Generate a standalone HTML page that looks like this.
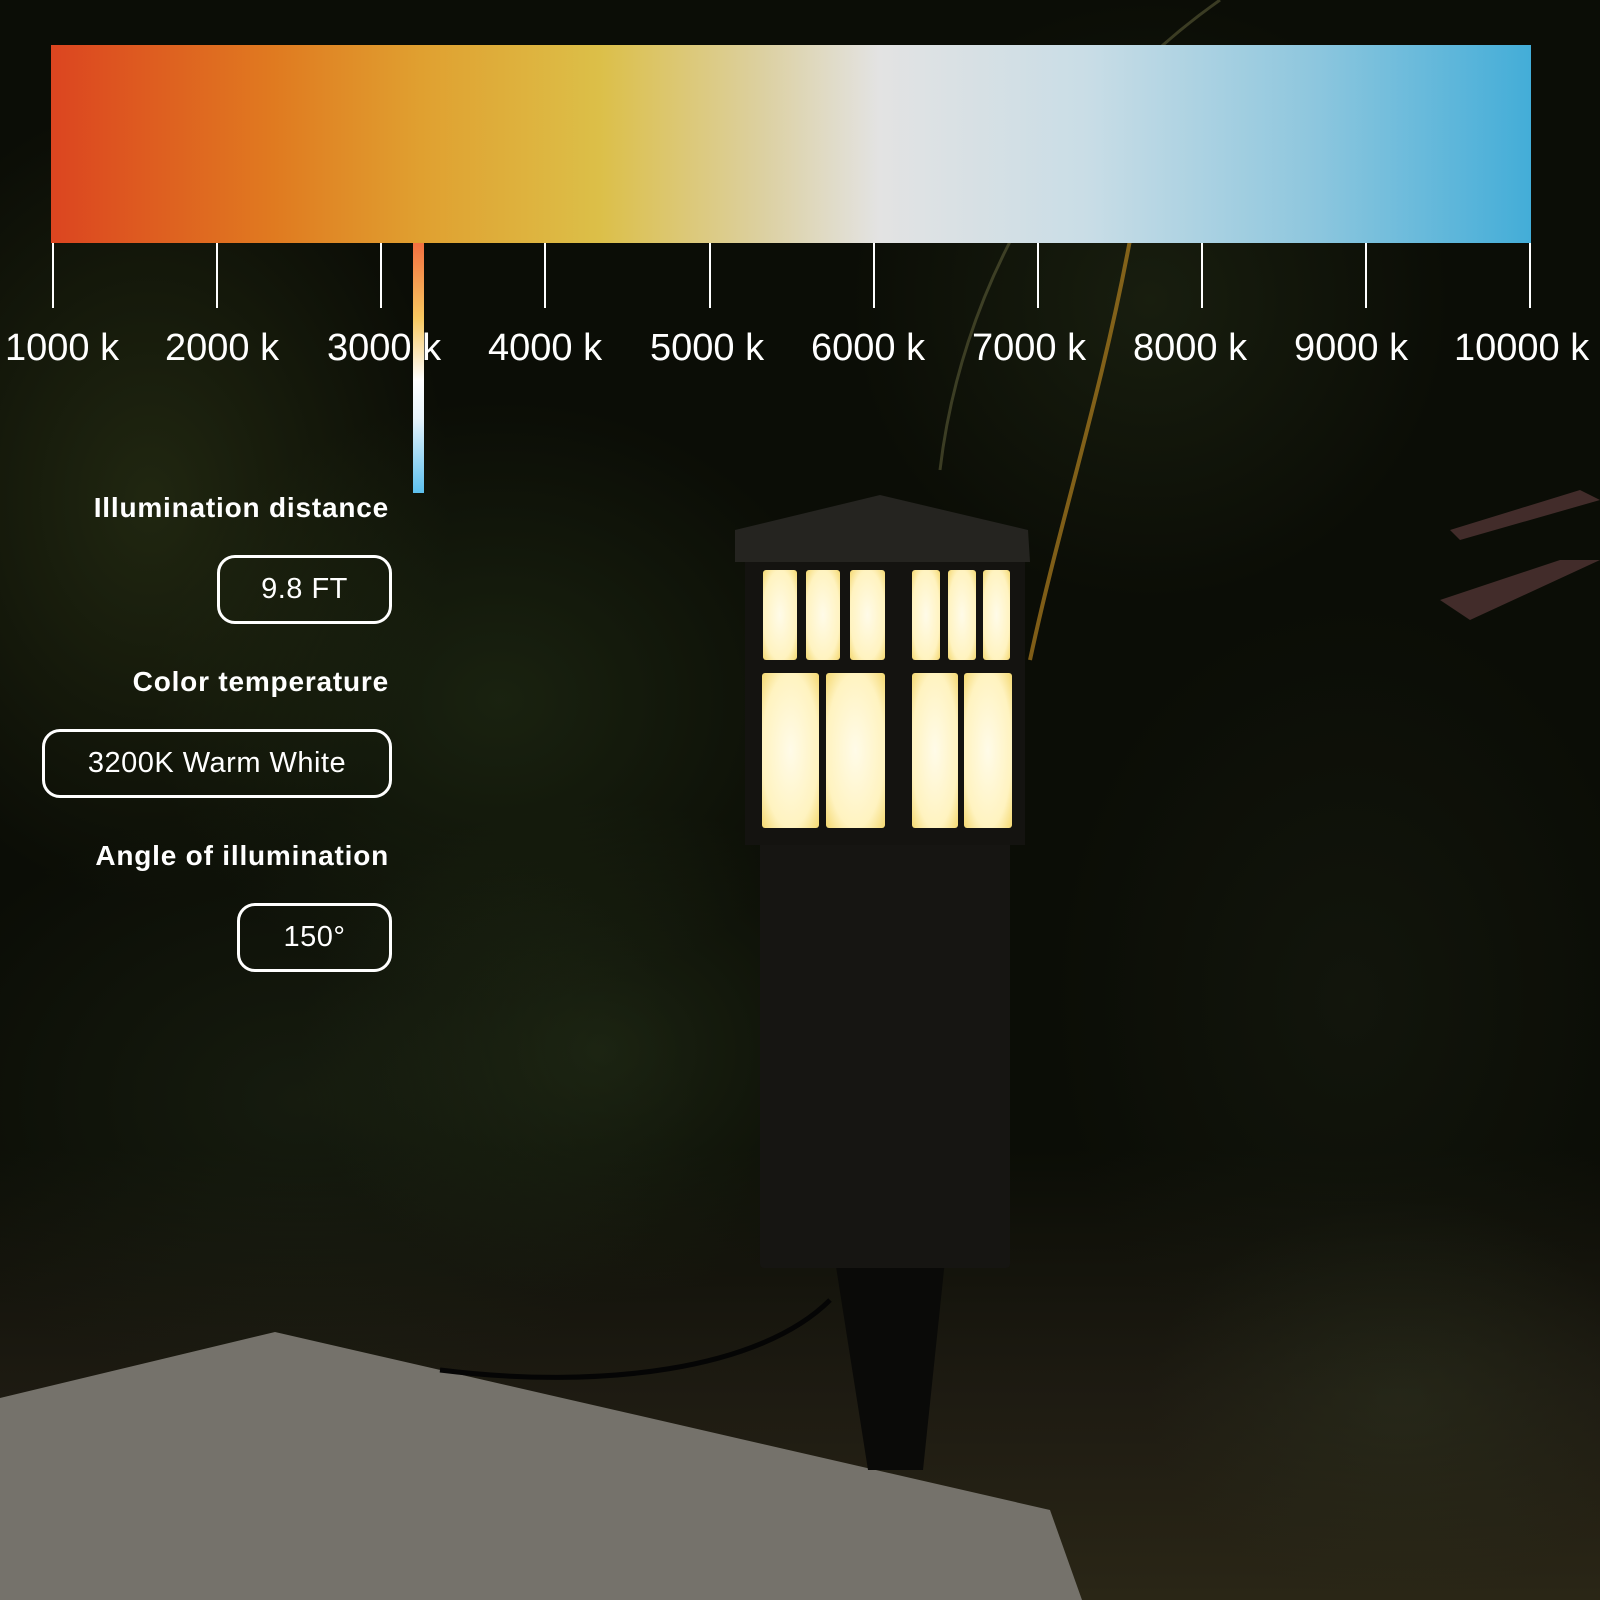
<!DOCTYPE html><html><head><style>
html,body{margin:0;padding:0}
body{width:1600px;height:1600px;position:relative;overflow:hidden;background:#0b0d06;font-family:"Liberation Sans",sans-serif;color:#fff}
.bg{position:absolute;inset:0;background:
radial-gradient(ellipse 300px 400px at 150px 500px,rgba(50,60,25,.55),transparent),
radial-gradient(ellipse 350px 300px at 500px 700px,rgba(40,55,25,.5),transparent),
radial-gradient(ellipse 300px 250px at 600px 1050px,rgba(45,60,30,.45),transparent),
radial-gradient(ellipse 400px 300px at 300px 1100px,rgba(35,45,25,.45),transparent),
radial-gradient(ellipse 300px 300px at 1150px 300px,rgba(40,50,25,.45),transparent),
radial-gradient(ellipse 300px 400px at 1350px 1000px,rgba(25,30,18,.5),transparent),
radial-gradient(ellipse 250px 200px at 1400px 1400px,rgba(45,50,30,.5),transparent),
linear-gradient(transparent 1150px,#1e1b12 1400px,#2a2616 1600px)}
.abs{position:absolute}
.lbl{position:absolute;top:327px;font-size:38px;white-space:nowrap}
.tick{position:absolute;top:243px;width:2px;height:65px;background:#fff}
.ttl{position:absolute;right:1211px;font-size:28px;font-weight:bold;text-align:right;white-space:nowrap;letter-spacing:.8px}
.box{position:absolute;border:3px solid #fff;border-radius:18px;box-sizing:border-box;font-size:29px;letter-spacing:.5px;display:flex;align-items:center;justify-content:center}
.p{position:absolute;background:radial-gradient(ellipse at center,#fffbe8,#fff3c0 70%,#f4d870);border-radius:3px}
</style></head><body>
<div class="bg"></div>
<svg class="abs" style="left:0;top:0" width="1600" height="1600">
<polygon points="0,1398 275,1332 1050,1510 1082,1600 0,1600" fill="#75726b"/>
<path d="M940,470 C960,300 1050,120 1220,0" stroke="#6a6a40" stroke-width="3" fill="none" opacity=".5"/>
<path d="M1030,660 C1060,520 1100,400 1130,240" stroke="#b08020" stroke-width="4" fill="none" opacity=".7"/>
<path d="M1450,530 L1580,490 L1600,500 L1460,540Z M1440,600 L1560,560 L1600,560 L1470,620Z" fill="#5a3a3a" opacity=".7"/>
<path d="M440,1370 C600,1390 760,1370 830,1300" stroke="#050505" stroke-width="5" fill="none"/>
</svg>
<!-- lamp -->
<div class="abs" style="left:835px;top:1260px;width:110px;height:210px;background:#0a0a08;clip-path:polygon(0 0,100% 0,80% 100%,30% 100%)"></div>
<div class="abs" style="left:760px;top:838px;width:250px;height:430px;background:#161512;border-radius:4px"></div>
<div class="abs" style="left:745px;top:555px;width:280px;height:290px;background:#141310"></div>
<svg class="abs" style="left:730px;top:490px" width="310" height="75"><polygon points="5,40 150,5 298,40 300,72 5,72" fill="#252420"/></svg>
<div class="p" style="left:763px;top:570px;width:34px;height:90px"></div>
<div class="p" style="left:806px;top:570px;width:34px;height:90px"></div>
<div class="p" style="left:850px;top:570px;width:35px;height:90px"></div>
<div class="p" style="left:912px;top:570px;width:28px;height:90px"></div>
<div class="p" style="left:948px;top:570px;width:28px;height:90px"></div>
<div class="p" style="left:983px;top:570px;width:27px;height:90px"></div>
<div class="p" style="left:762px;top:673px;width:57px;height:155px"></div>
<div class="p" style="left:826px;top:673px;width:59px;height:155px"></div>
<div class="p" style="left:912px;top:673px;width:46px;height:155px"></div>
<div class="p" style="left:964px;top:673px;width:48px;height:155px"></div>
<!-- bar -->
<div class="abs" style="left:51px;top:45px;width:1480px;height:198px;background:linear-gradient(90deg,#dc4520 0%,#e07a20 15%,#e0a030 25%,#dcbf48 37%,#dcd0a0 48%,#e3e3e3 56%,#c9dde6 70%,#8fc7de 85%,#43add8 100%)"></div>
<div class="tick" style="left:52px"></div><div class="tick" style="left:216px"></div><div class="tick" style="left:380px"></div><div class="tick" style="left:544px"></div><div class="tick" style="left:709px"></div><div class="tick" style="left:873px"></div><div class="tick" style="left:1037px"></div><div class="tick" style="left:1201px"></div><div class="tick" style="left:1365px"></div><div class="tick" style="left:1529px"></div>
<div class="lbl" style="left:5px">1000 k</div><div class="lbl" style="left:165px">2000 k</div><div class="lbl" style="left:327px">3000 k</div><div class="lbl" style="left:488px">4000 k</div><div class="lbl" style="left:650px">5000 k</div><div class="lbl" style="left:811px">6000 k</div><div class="lbl" style="left:972px">7000 k</div><div class="lbl" style="left:1133px">8000 k</div><div class="lbl" style="left:1294px">9000 k</div><div class="lbl" style="left:1454px">10000 k</div>
<div class="abs" style="left:413px;top:243px;width:11px;height:250px;background:linear-gradient(#f47040,#f8c860 30%,#fff 55%,#e8f4fb 70%,#5cc0ee 100%)"></div>
<div class="ttl" style="top:492px">Illumination distance</div>
<div class="box" style="left:217px;top:555px;width:175px;height:69px">9.8 FT</div>
<div class="ttl" style="top:666px">Color temperature</div>
<div class="box" style="left:42px;top:729px;width:350px;height:69px">3200K Warm White</div>
<div class="ttl" style="top:840px">Angle of illumination</div>
<div class="box" style="left:237px;top:903px;width:155px;height:69px">150°</div>
</body></html>
